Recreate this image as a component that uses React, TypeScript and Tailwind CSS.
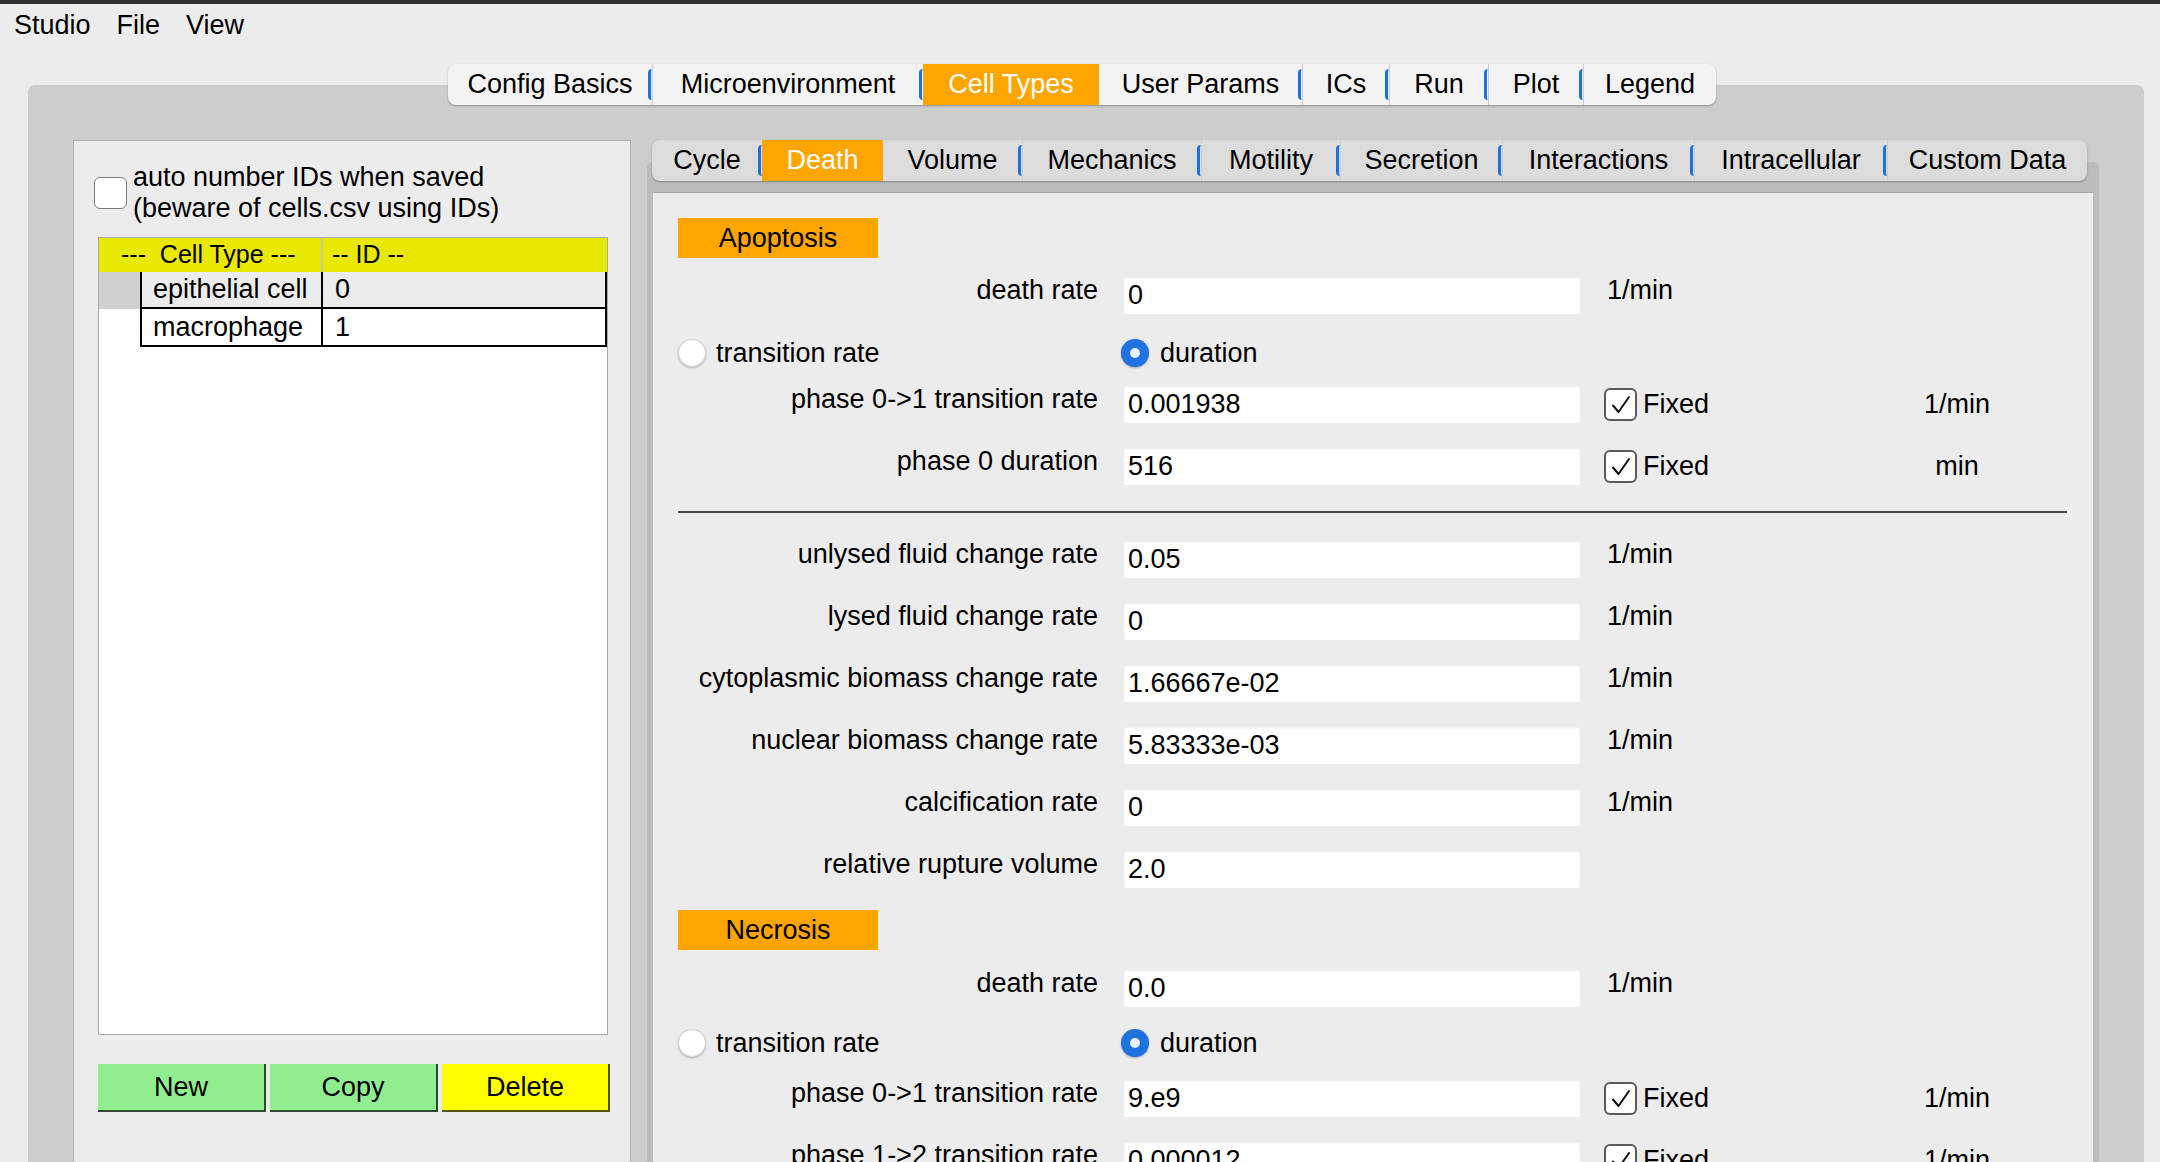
import React from 'react';

type Tab = { label: string; w: string; active?: boolean };

const topTabs: Tab[] = [
  { label: 'Config Basics', w: 'w-[204px]' },
  { label: 'Microenvironment', w: 'w-[271px]' },
  { label: 'Cell Types', w: 'w-[176px]', active: true },
  { label: 'User Params', w: 'w-[203px]' },
  { label: 'ICs', w: 'w-[87px]' },
  { label: 'Run', w: 'w-[99px]' },
  { label: 'Plot', w: 'w-[95px]' },
  { label: 'Legend', w: 'w-[133px]' },
];

const subTabs: Tab[] = [
  { label: 'Cycle', w: 'w-[110px]' },
  { label: 'Death', w: 'w-[121px]', active: true },
  { label: 'Volume', w: 'w-[139px]' },
  { label: 'Mechanics', w: 'w-[179px]' },
  { label: 'Motility', w: 'w-[139px]' },
  { label: 'Secretion', w: 'w-[162px]' },
  { label: 'Interactions', w: 'w-[192px]' },
  { label: 'Intracellular', w: 'w-[193px]' },
  { label: 'Custom Data', w: 'w-[200px]' },
];

const TabBar: React.FC<{ tabs: Tab[]; bg: string; className?: string }> = ({ tabs, bg, className }) => (
  <div
    className={`relative z-10 flex h-[41px] w-fit overflow-hidden rounded-[8px] shadow-[0_1px_2px_rgba(0,0,0,0.3)] ${bg} ${className ?? ''}`}
  >
    {tabs.map((t, i) => (
      <div
        key={t.label}
        className={`relative flex h-full items-center justify-center ${t.w} ${
          t.active ? 'bg-[#ffa500] text-white' : i > 0 && !tabs[i - 1].active ? 'border-l border-[#cdcdcd]' : ''
        }`}
      >
        {t.label}
        {/* focus ring remnant on the right end of each idle tab */}
        {!t.active && i < tabs.length - 1 && (
          <span className="absolute right-0 top-[5px] h-[31px] w-[4px] rounded-l-full border-l-[3px] border-[#1d6fe0]" />
        )}
      </div>
    ))}
  </div>
);

const Radio: React.FC<{ on?: boolean }> = ({ on }) =>
  on ? (
    <div className="flex h-[28px] w-[28px] items-center justify-center rounded-full bg-[#1f72e0] shadow-[0_1px_2px_rgba(0,0,0,0.3)]">
      <div className="h-[10px] w-[10px] rounded-full bg-[#eaf2ff]" />
    </div>
  ) : (
    <div className="h-[28px] w-[28px] rounded-full border border-[#d6d6d6] bg-white shadow-[0_1px_2px_rgba(0,0,0,0.25)]" />
  );

const Checked: React.FC = () => (
  <div className="flex h-[33px] w-[33px] items-center justify-center rounded-[6px] border-2 border-[#5b5b5b] bg-white">
    <svg width="24" height="24" viewBox="0 0 24 24" fill="none">
      <path d="M4 12.5 L9.5 19 L20 4" stroke="#111" strokeWidth="2" strokeLinecap="round" strokeLinejoin="round" />
    </svg>
  </div>
);

type FieldProps = { label: string; value: string; unit?: string; fixed?: boolean; mt: string };

const Field: React.FC<FieldProps> = ({ label, value, unit, fixed, mt }) => (
  <div className={`flex items-start ${mt}`}>
    <div className="w-[420px] text-right leading-[26px]">{label}</div>
    <div className="ml-[26px] flex h-[37px] w-[456px] items-center bg-white pl-[4px] shadow-[inset_0_1px_2px_rgba(0,0,0,0.08)]">
      {value}
    </div>
    {fixed ? (
      <div className="ml-[24px] flex h-[37px] items-center">
        <div className="flex w-[290px] items-center">
          <Checked />
          <span className="ml-[6px]">Fixed</span>
        </div>
        <span className="w-[126px] text-center">{unit}</span>
      </div>
    ) : (
      unit && <div className="ml-[27px] leading-[26px]">{unit}</div>
    )}
  </div>
);

const RadioRow: React.FC<{ mt: string }> = ({ mt }) => (
  <div className={`flex h-[30px] items-center ${mt}`}>
    <div className="flex w-[443px] items-center">
      <Radio />
      <span className="ml-[10px]">transition rate</span>
    </div>
    <Radio on />
    <span className="ml-[11px]">duration</span>
  </div>
);

const SectionHead: React.FC<{ title: string; mt: string }> = ({ title, mt }) => (
  <div className={`flex h-[40px] w-[200px] items-center justify-center bg-[#ffa500] ${mt}`}>{title}</div>
);

export default function App() {
  return (
    <div className="h-[1162px] w-[2160px] overflow-hidden bg-[#ececec] font-['Liberation_Sans',Arial,sans-serif] text-[27px] text-black">
      <div className="h-[4px] bg-[#303030]" />
      <div className="flex h-[42px] items-center gap-[26px] pl-[14px]">
        <span>Studio</span>
        <span>File</span>
        <span>View</span>
      </div>

      <div className="pl-[28px] pr-[16px]">
        <TabBar tabs={topTabs} bg="bg-[#f3f3f3]" className="ml-[420px] mt-[18px]" />

        <div className="-mt-[20px] flex h-[1120px] gap-[16px] rounded-t-[7px] bg-[#cdcdcd] px-[45px] pt-[55px]">
          {/* cell type list */}
          <div className="h-[1100px] w-[558px] border border-[#b0b0b0] bg-[#ececec]">
            <div className="flex items-center pl-[20px] pt-[21px]">
              <div className="h-[32px] w-[33px] rounded-[6px] border-[1.5px] border-[#7a7a7a] bg-white" />
              <div className="ml-[6px] leading-[31px]">
                auto number IDs when saved
                <br />
                (beware of cells.csv using IDs)
              </div>
            </div>

            <div className="ml-[24px] mt-[13px] h-[798px] w-[510px] border border-[#a9a9a9] bg-white">
              <div className="flex h-[34px] items-center bg-[#e8e800] text-[25px]">
                <div className="w-[222px] whitespace-pre pl-[22px]">{'---  Cell Type ---'}</div>
                <div className="h-full w-[2px] bg-[#c9c9a0]" />
                <div className="pl-[9px]">-- ID --</div>
              </div>
              <div className="flex h-[37px] bg-[#ececec]">
                <div className="w-[41px] bg-[#d0d0d0]" />
                <div className="flex flex-1 border-b-2 border-black">
                  <div className="flex w-[181px] items-center border-l-2 border-black pl-[11px]">epithelial cell</div>
                  <div className="flex flex-1 items-center border-x-2 border-black pl-[12px]">0</div>
                </div>
              </div>
              <div className="flex h-[38px]">
                <div className="w-[41px]" />
                <div className="flex flex-1 border-b-2 border-black">
                  <div className="flex w-[181px] items-center border-l-2 border-black pl-[11px]">macrophage</div>
                  <div className="flex flex-1 items-center border-x-2 border-black pl-[12px]">1</div>
                </div>
              </div>
            </div>

            <div className="ml-[24px] mt-[29px] flex gap-[4px]">
              <button className="h-[48px] w-[168px] border-b-2 border-r-2 border-[#2f4a2f] bg-[#90ee90]">New</button>
              <button className="h-[48px] w-[168px] border-b-2 border-r-2 border-[#2f4a2f] bg-[#90ee90]">Copy</button>
              <button className="h-[48px] w-[168px] border-b-2 border-r-2 border-[#55550a] bg-[#ffff00]">Delete</button>
            </div>
          </div>

          {/* cell type detail tabs */}
          <div className="w-[1452px]">
            <TabBar tabs={subTabs} bg="bg-[#dcdcdc]" className="ml-[5px]" />
            <div className="-mt-[19px] h-[1100px] rounded-t-[6px] bg-[#bcbcbc] px-[6px] pt-[30px]">
              <div className="flex h-full flex-col border-t border-[#a3a3a3] bg-[#ececec] pl-[25px]">
                <SectionHead title="Apoptosis" mt="mt-[25px]" />
                <Field label="death rate" value="0" unit="1/min" mt="mt-[19px]" />
                <RadioRow mt="mt-[24px]" />
                <Field label="phase 0->1 transition rate" value="0.001938" unit="1/min" fixed mt="mt-[18px]" />
                <Field label="phase 0 duration" value="516" unit="min" fixed mt="mt-[25px]" />
                <div className="mt-[26px] h-[2px] w-[1389px] bg-[#4d4d4d]" />
                <Field label="unlysed fluid change rate" value="0.05" unit="1/min" mt="mt-[28px]" />
                <Field label="lysed fluid change rate" value="0" unit="1/min" mt="mt-[25px]" />
                <Field label="cytoplasmic biomass change rate" value="1.66667e-02" unit="1/min" mt="mt-[25px]" />
                <Field label="nuclear biomass change rate" value="5.83333e-03" unit="1/min" mt="mt-[25px]" />
                <Field label="calcification rate" value="0" unit="1/min" mt="mt-[25px]" />
                <Field label="relative rupture volume" value="2.0" mt="mt-[25px]" />
                <SectionHead title="Necrosis" mt="mt-[22px]" />
                <Field label="death rate" value="0.0" unit="1/min" mt="mt-[20px]" />
                <RadioRow mt="mt-[21px]" />
                <Field label="phase 0->1 transition rate" value="9.e9" unit="1/min" fixed mt="mt-[22px]" />
                <Field label="phase 1->2 transition rate" value="0.000012" unit="1/min" fixed mt="mt-[25px]" />
              </div>
            </div>
          </div>
        </div>
      </div>
    </div>
  );
}
